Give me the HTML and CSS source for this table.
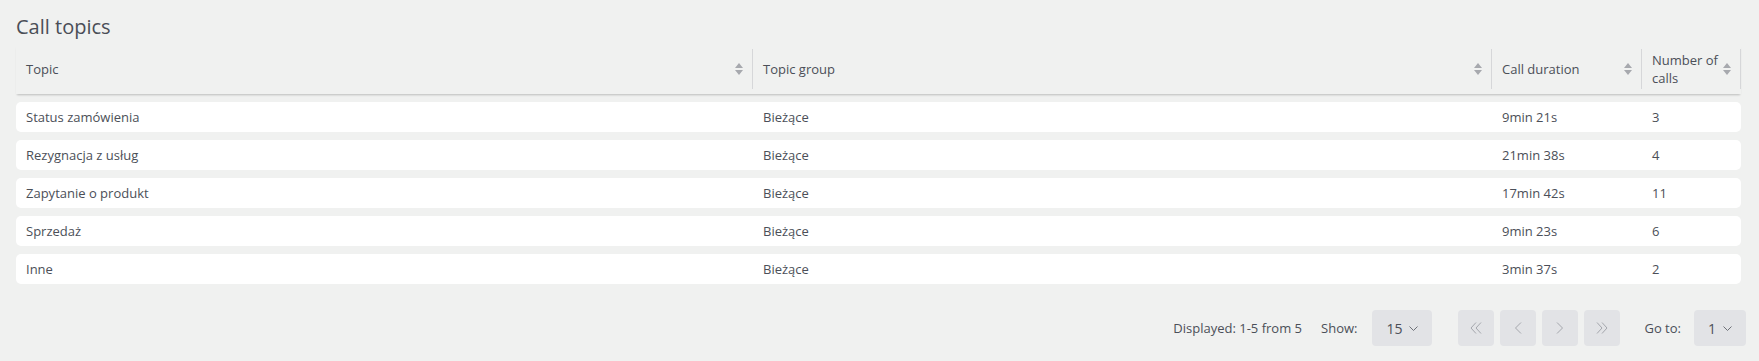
FILE: index.html
```
<!DOCTYPE html>
<html lang="pl">
<head>
    <meta charset="UTF-8">
    <title>Call topics</title>
    <link rel="stylesheet" href="styles.css">
</head>
<body>
    <div class="page">
        <h1 class="title">Call topics</h1>

        <div class="table">
            <div class="thead">
                <div class="th"><span>Topic</span><svg class="sort" viewBox="0 0 8 12"><path d="M0 5L4 0L8 5Z M0 7L8 7L4 12Z"/></svg></div>
                <div class="th"><span>Topic group</span><svg class="sort" viewBox="0 0 8 12"><path d="M0 5L4 0L8 5Z M0 7L8 7L4 12Z"/></svg></div>
                <div class="th"><span>Call duration</span><svg class="sort" viewBox="0 0 8 12"><path d="M0 5L4 0L8 5Z M0 7L8 7L4 12Z"/></svg></div>
                <div class="th"><span>Number of calls</span><svg class="sort" viewBox="0 0 8 12"><path d="M0 5L4 0L8 5Z M0 7L8 7L4 12Z"/></svg></div>
            </div>

            <div class="tr"><div class="td">Status zamówienia</div><div class="td">Bieżące</div><div class="td">9min 21s</div><div class="td">3</div></div>
            <div class="tr"><div class="td">Rezygnacja z usług</div><div class="td">Bieżące</div><div class="td">21min 38s</div><div class="td">4</div></div>
            <div class="tr"><div class="td">Zapytanie o produkt</div><div class="td">Bieżące</div><div class="td">17min 42s</div><div class="td">11</div></div>
            <div class="tr"><div class="td">Sprzedaż</div><div class="td">Bieżące</div><div class="td">9min 23s</div><div class="td">6</div></div>
            <div class="tr"><div class="td">Inne</div><div class="td">Bieżące</div><div class="td">3min 37s</div><div class="td">2</div></div>
        </div>

        <div class="pager">
            <span class="pager-info">Displayed: 1-5 from 5</span>
            <span class="pager-label">Show:</span>
            <div class="select select-size">15 <svg class="caret" viewBox="0 0 9 5"><path d="M0.5 0.5L4.5 4.5L8.5 0.5"/></svg></div>

            <div class="nav">
                <button class="nav-btn"><svg viewBox="0 0 12 12"><path d="M6 0.5L1 6L6 11.5 M11 0.5L6 6L11 11.5"/></svg></button>
                <button class="nav-btn"><svg viewBox="0 0 12 12"><path d="M9 0.5L3.5 6L9 11.5"/></svg></button>
                <button class="nav-btn"><svg viewBox="0 0 12 12"><path d="M3 0.5L8.5 6L3 11.5"/></svg></button>
                <button class="nav-btn"><svg viewBox="0 0 12 12"><path d="M1 0.5L6 6L1 11.5 M6 0.5L11 6L6 11.5"/></svg></button>
            </div>

            <span class="pager-label goto">Go to:</span>
            <div class="select select-page">1 <svg class="caret" viewBox="0 0 9 5"><path d="M0.5 0.5L4.5 4.5L8.5 0.5"/></svg></div>
        </div>
    </div>
</body>
</html>
```

FILE: styles.css
```
* {
    margin: 0;
    padding: 0;
    box-sizing: border-box;
}

body {
    font-family: "Open Sans", "Noto Sans", sans-serif;
    font-size: 13px;
    color: #4b4f58;
    background: #f0f1f0;
}

.page {
    padding: 14px 13px 0 16px;
}

.title {
    font-size: 20px;
    font-weight: 400;
    line-height: 26px;
    color: #4a4e57;
}

.table {
    margin: 5px 5px 0 0;
}

.thead,
.tr {
    display: grid;
    grid-template-columns: 737px 739px 150px 1fr;
}

.thead {
    padding: 4px 0 5px;
    box-shadow: 0 2px 2px -1px rgba(0, 0, 0, 0.22);
}

.th {
    display: flex;
    align-items: center;
    justify-content: space-between;
    height: 40px;
    padding: 0 9px 0 10px;
    border-right: 1px solid #d6d7d9;
    line-height: 18px;
}

.th span {
    padding-right: 3px;
}

.sort {
    flex: none;
    width: 8px;
    height: 12px;
    fill: #a7a9ae;
}

.tr {
    height: 30px;
    margin-top: 8px;
    background: #fff;
    border-radius: 5px;
    align-items: center;
}

.td {
    padding-left: 10px;
    white-space: nowrap;
}

.pager {
    display: flex;
    align-items: center;
    justify-content: flex-end;
    margin-top: 26px;
    height: 36px;
}

.pager-info {
    margin-right: 19px;
}

.pager-label {
    margin-right: 15px;
}

.select {
    display: flex;
    align-items: center;
    justify-content: center;
    gap: 7px;
    height: 36px;
    background: #e2e3e6;
    border-radius: 4px;
    font-size: 14px;
    color: #4b4f58;
}

.select-size {
    width: 60px;
}

.select-page {
    width: 52px;
}

.caret {
    width: 9px;
    height: 5px;
    fill: none;
    stroke: #6e7178;
    stroke-width: 1;
}

.nav {
    display: flex;
    gap: 6px;
    margin-left: 26px;
}

.nav-btn {
    display: flex;
    align-items: center;
    justify-content: center;
    width: 36px;
    height: 36px;
    border: none;
    border-radius: 4px;
    background: #e2e3e6;
}

.nav-btn svg {
    width: 12px;
    height: 12px;
    fill: none;
    stroke: #a4a6ac;
    stroke-width: 1;
}

.goto {
    margin-left: 24px;
    margin-right: 13px;
}
```
